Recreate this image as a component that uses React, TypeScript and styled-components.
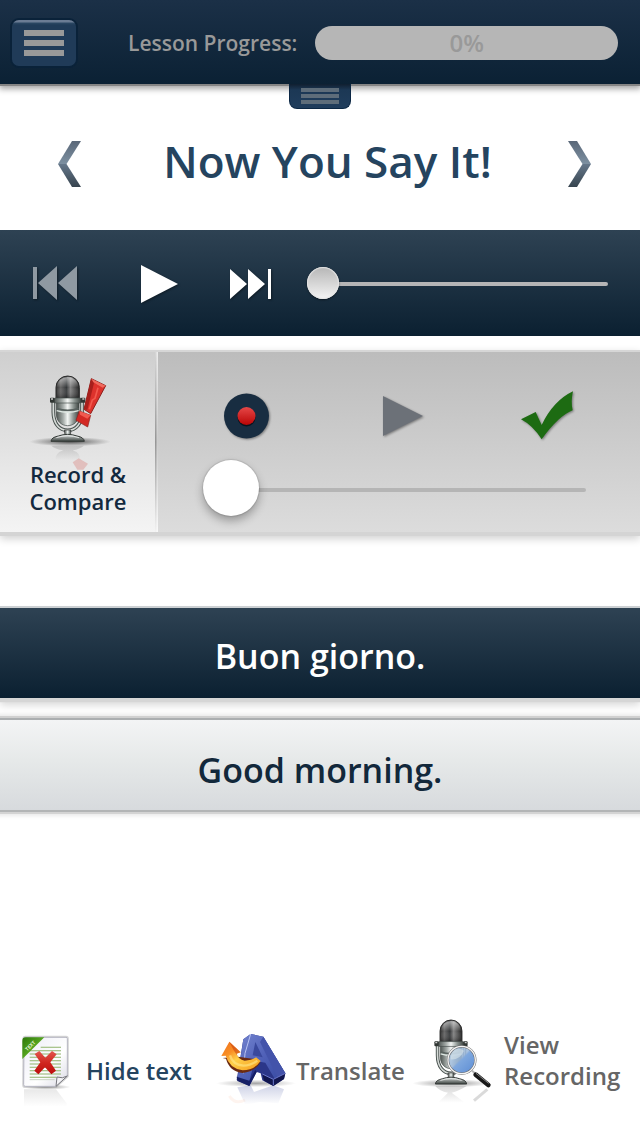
import React, { useState } from "react";
import styled, { createGlobalStyle } from "styled-components";

const GlobalStyle = createGlobalStyle`
  * { box-sizing: border-box; }
  body {
    margin: 0;
    background: #fff;
    font-family: "Open Sans", "Noto Sans", sans-serif;
    font-weight: 600;
  }
  button { font: inherit; color: inherit; border: 0; padding: 0; background: none; cursor: pointer; }
  svg { display: block; overflow: visible; }
`;

const Page = styled.div`
  min-height: 100vh;
  display: flex;
  flex-direction: column;
`;

const Header = styled.header`
  position: relative;
  display: flex;
  align-items: center;
  height: 84px;
  padding: 2px 22px 0 12px;
  background: linear-gradient(#1b3047, #0b2134);
  box-shadow: 0 2px 0 #858585, 0 4px 6px 1px rgba(0, 0, 0, 0.35);
`;

const MenuButton = styled.button`
  display: flex;
  flex-direction: column;
  align-items: center;
  justify-content: center;
  gap: 4px;
  width: 64px;
  height: 46px;
  margin-right: 52px;
  border-radius: 7px;
  background: linear-gradient(#6b7c94 0, #6b7c94 2px, #2c4864 3px, #203b58 5px, #203b58);
  box-shadow: 0 0 0 2px #0a2239;
`;

const MenuBar = styled.span`
  width: 40px;
  height: 6px;
  background: #999;
`;

const ProgressLabel = styled.span`
  margin-right: 18px;
  font-size: 21px;
  line-height: 30px;
  color: #999;
  white-space: nowrap;
`;

const ProgressBar = styled.div`
  flex: 1;
  height: 34px;
  border-radius: 17px;
  background: #b6b6b6;
  color: #999;
  font-size: 24px;
  line-height: 34px;
  text-align: center;
`;

const PullTab = styled.button`
  position: absolute;
  top: 100%;
  left: 50%;
  width: 62px;
  height: 25px;
  margin-left: -31px;
  padding-top: 4px;
  display: flex;
  flex-direction: column;
  align-items: center;
  gap: 2px;
  border: solid #0b2744;
  border-width: 0 1px 1px;
  border-radius: 0 0 8px 8px;
  background: linear-gradient(#101f30, #1c3855 6px, #203d5c);
`;

const TabBar = styled.span`
  width: 38px;
  height: 4px;
  background: #5e6d7a;
`;

const TitleRow = styled.section`
  display: flex;
  align-items: center;
  justify-content: space-between;
  height: 146px;
  padding: 13px 49px 0 58px;
`;

const Title = styled.h1`
  margin: 0;
  padding: 0 0 6px 6px;
  font-size: 44px;
  line-height: 60px;
  font-weight: 600;
  color: #25445f;
`;

const Player = styled.section`
  display: flex;
  align-items: center;
  gap: 35px;
  height: 106px;
  padding: 1px 32px 0;
  background: linear-gradient(#2e4253, #0b2031);
`;

const PlayerButtons = styled.div`
  display: flex;
  align-items: center;
  gap: 52px;
`;

const IconButton = styled.button<{ $width?: number }>`
  width: ${(p) => (p.$width ? `${p.$width}px` : "auto")};
  filter: drop-shadow(1px 1px 1px rgba(0, 0, 0, 0.4));
`;

const Slider = styled.input<{ $size: number; $shift: number; $track: string; $thumb: string; $shadow: string }>`
  appearance: none;
  flex: 1;
  width: 100%;
  min-width: 0;
  height: ${(p) => p.$size}px;
  margin: 0;
  background: none;
  &::-webkit-slider-runnable-track {
    height: 4px;
    border-radius: 2px;
    background: ${(p) => p.$track};
  }
  &::-webkit-slider-thumb {
    appearance: none;
    width: ${(p) => p.$size}px;
    height: ${(p) => p.$size}px;
    margin-top: ${(p) => p.$shift}px;
    border-radius: 50%;
    background: ${(p) => p.$thumb};
    box-shadow: ${(p) => p.$shadow};
  }
`;

const Recorder = styled.section`
  display: flex;
  margin-top: 14px;
  border-top: 2px solid #d6d6d6;
  border-bottom: 4px solid #d4d4d4;
  box-shadow: 0 3px 8px rgba(0, 0, 0, 0.18);
`;

const RecordTab = styled.button`
  position: relative;
  width: 158px;
  height: 180px;
  padding: 18px 24px 0 28px;
  display: flex;
  flex-direction: column;
  align-items: flex-start;
  background: linear-gradient(#cfcfcf, #f4f4f4);
  color: #13293e;
  font-size: 22px;
  line-height: 27px;
  &::after {
    content: "";
    position: absolute;
    top: 0;
    right: 0;
    width: 3px;
    height: 100%;
    background: linear-gradient(90deg, transparent, rgba(255, 255, 255, 0.7)), linear-gradient(#d0d0d0, #888 50%, #f0f0f0);
  }
`;

const TabCaption = styled.span`
  position: relative;
  width: 100px;
`;

const RecordPanel = styled.div`
  flex: 1;
  display: flex;
  flex-direction: column;
  padding: 38px 54px 14px 45px;
  gap: 20px;
  background: linear-gradient(#bcbcbc, #dcdcdc);
`;

const RecordButtons = styled.div`
  display: flex;
  align-items: center;
  justify-content: space-between;
  padding: 0 12px 0 20px;
`;

const Phrases = styled.section`
  margin-top: 70px;
  display: flex;
  flex-direction: column;
  gap: 20px;
`;

const Phrase = styled.p<{ $dark?: boolean }>`
  margin: 0;
  padding-top: ${(p) => (p.$dark ? 5 : 7)}px;
  height: ${(p) => (p.$dark ? 92 : 94)}px;
  border-top: 2px solid ${(p) => (p.$dark ? "#ccd0d3" : "#abaeb0")};
  border-bottom: ${(p) => (p.$dark ? "0" : "2px solid #b2b4b5")};
  font-size: 34px;
  line-height: 86px;
  text-align: center;
  color: ${(p) => (p.$dark ? "#fff" : "#12283b")};
  background: ${(p) => (p.$dark ? "linear-gradient(#2e4253, #0b2031)" : "linear-gradient(#f3f4f5, #e6e9e9 45%, #d7dadd)")};
  box-shadow: ${(p) => (p.$dark ? "0 4px 1px #d6d6d6, 0 7px 8px rgba(0,0,0,.16)" : "0 -2px 0 #d0d0d0, 0 2px 0 #d3d3d3, 0 0 4px 4px rgba(0,0,0,.09)")};
`;

const Footer = styled.footer`
  display: grid;
  grid-template-columns: 196fr 196fr 214fr;
  margin-top: auto;
  padding: 20px 14px 20px 20px;
`;

const FooterButton = styled.button<{ $color: string; $gap?: number }>`
  display: flex;
  align-items: flex-start;
  gap: ${(p) => p.$gap ?? 0}px;
  height: 100px;
  text-align: left;
  font-size: 24px;
  line-height: 31px;
  color: ${(p) => p.$color};
`;

const FooterText = styled.span<{ $top: number }>`
  padding-top: ${(p) => p.$top}px;
  white-space: nowrap;
`;

const Chevron = ({ right }: { right?: boolean }) => (
  <svg width="24" height="46" viewBox="0 0 24 46" aria-hidden="true">
    <defs>
      <linearGradient id="chevTop" x1="0" y1="0" x2="0" y2="1">
        <stop offset="0" stopColor="#5a6879" />
        <stop offset="1" stopColor="#7d90a1" />
      </linearGradient>
      <linearGradient id="chevBottom" x1="0" y1="0" x2="0" y2="1">
        <stop offset="0" stopColor="#65778a" />
        <stop offset="1" stopColor="#37444f" />
      </linearGradient>
    </defs>
    <g transform={right ? "translate(24 0) scale(-1 1)" : undefined}>
      <path d="M14 0H23L8.500 23H0Z" fill="url(#chevTop)" />
      <path d="M0 23H8.500L23 46H14Z" fill="url(#chevBottom)" />
    </g>
  </svg>
);

const MicDefs = () => (
  <defs>
    <linearGradient id="micHead">
      <stop offset="0" stopColor="#333" />
      <stop offset=".2" stopColor="#777" />
      <stop offset=".45" stopColor="#3c3f41" />
      <stop offset=".62" stopColor="#999" />
      <stop offset="1" stopColor="#262626" />
    </linearGradient>
    <linearGradient id="micBody">
      <stop offset="0" stopColor="#4e5552" />
      <stop offset=".3" stopColor="#a5aca9" />
      <stop offset=".5" stopColor="#f3f6f4" />
      <stop offset=".75" stopColor="#8d9692" />
      <stop offset="1" stopColor="#3f4643" />
    </linearGradient>
    <linearGradient id="micTop" x1="0" y1="0" x2="0" y2="1">
      <stop offset="0" stopColor="#fff" stopOpacity=".55" />
      <stop offset=".5" stopColor="#fff" stopOpacity="0" />
      <stop offset="1" stopColor="#000" stopOpacity=".3" />
    </linearGradient>
    <linearGradient id="micBase" x1="0" y1="0" x2="0" y2="1">
      <stop offset="0" stopColor="#dfe3e1" />
      <stop offset="1" stopColor="#39403d" />
    </linearGradient>
    <radialGradient id="floor">
      <stop offset="0" stopColor="#000" stopOpacity=".65" />
      <stop offset=".5" stopColor="#000" stopOpacity=".3" />
      <stop offset="1" stopColor="#000" stopOpacity="0" />
    </radialGradient>
    <linearGradient id="fade" x1="0" y1="0" x2="0" y2="1">
      <stop offset="0" stopColor="#777" stopOpacity=".3" />
      <stop offset="1" stopColor="#777" stopOpacity="0" />
    </linearGradient>
    <pattern id="mesh" width="6" height="6" patternUnits="userSpaceOnUse">
      <path d="M0 0L6 6M6 0L0 6" stroke="#111" strokeWidth="1" opacity=".5" />
    </pattern>
  </defs>
);

const Microphone = () => (
  <g>
    <path d="M-43 78V108C-43 144-24 163 0 163S43 144 43 108V78" fill="none" stroke="#47504d" strokeWidth="11" />
    <path d="M-43 78V108C-43 144-24 163 0 163S43 144 43 108V78" fill="none" stroke="#d5dad7" strokeWidth="5" />
    <path d="M-34 78H34V114C34 136 18 149 0 149S-34 136-34 114Z" fill="url(#micBody)" stroke="#3d4542" strokeWidth="2" />
    <path d="M-33 98Q0 108 33 98" fill="none" stroke="#58625f" strokeWidth="5" />
    <path d="M-33 104Q0 114 33 104" fill="none" stroke="#dfe9e4" strokeWidth="4" />
    <path d="M-35 68V34A35 34 0 0 1 35 34V68Z" fill="url(#micHead)" stroke="#2a2a2a" strokeWidth="3" />
    <path d="M-32 66V34A32 31 0 0 1 32 34V66Z" fill="url(#mesh)" />
    <path d="M-32 66V34A32 31 0 0 1 32 34V66Z" fill="url(#micTop)" />
    <rect x="-40" y="66" width="80" height="15" rx="3" fill="url(#micBody)" stroke="#444c49" strokeWidth="2" />
    <rect x="-53" y="65" width="14" height="15" rx="3" fill="#303633" />
    <rect x="39" y="65" width="14" height="15" rx="3" fill="#303633" />
    <path d="M-50 69H-44M44 69H50" stroke="#ccc" strokeWidth="4" />
    <path d="M-10 162H10L8 178H-8Z" fill="url(#micBody)" stroke="#333" strokeWidth="2" />
    <path d="M-50 196Q-49 184-28 180Q0 170 28 180Q49 184 50 196Z" fill="url(#micBase)" stroke="#343a37" strokeWidth="3" />
    <path d="M-34 185Q0 174 34 185" fill="none" stroke="#fff" strokeWidth="3" opacity=".7" />
  </g>
);

const RecordIcon = () => (
  <svg width="84" height="91" viewBox="84 75 252 273" aria-hidden="true">
    <MicDefs />
    <ellipse cx="210" cy="290" rx="122" ry="14" fill="url(#floor)" />
    <path d="M154 302H252Q240 312 218 316Q245 326 238 345H168Q162 326 190 316Q164 312 154 302Z" fill="url(#fade)" />
    <path d="M218 352L236 340L264 356L250 374H232Z" fill="#dc9f9b" opacity=".55" />
    <g transform="translate(203 93)">
      <Microphone />
    </g>
    <path d="M274 101L317 122L272 206L252 193Z" fill="#dd322c" stroke="#8c211d" strokeWidth="3" />
    <path d="M274 101L283 110L262 195L252 193Z" fill="#a81f1c" />
    <path d="M274 101L317 122L308 128L280 112Z" fill="#f06a5d" />
    <path d="M294 128L285 160L277 165L268 193" fill="none" stroke="#f2594d" strokeWidth="5" />
    <path d="M238 198L272 211L263 246L228 226Z" fill="#d32924" stroke="#8c211d" strokeWidth="2" />
    <path d="M238 198L272 211L262 221L240 209Z" fill="#f05a50" />
  </svg>
);

const ViewIcon = () => (
  <svg width="88" height="100" viewBox="6 18 264 300" aria-hidden="true">
    <defs>
      <linearGradient id="lens" x1="0" y1="0" x2="1" y2="1">
        <stop offset="0" stopColor="#b6cde0" stopOpacity=".8" />
        <stop offset=".45" stopColor="#9cb9db" stopOpacity=".88" />
        <stop offset=".5" stopColor="#7fa8de" />
        <stop offset="1" stopColor="#5a8bd4" />
      </linearGradient>
    </defs>
    <ellipse cx="125" cy="220" rx="118" ry="12" fill="url(#floor)" opacity=".7" />
    <path d="M76 228H170Q145 244 125 248L165 278H84L114 248Q88 244 76 228Z" fill="url(#fade)" />
    <path d="M192 272L232 238" stroke="#888" strokeWidth="9" opacity=".3" />
    <g transform="translate(123 30) scale(.94 .98)">
      <Microphone />
    </g>
    <path d="M186 182L235 224" stroke="#b7b7b7" strokeWidth="6" />
    <path d="M197 194L235 225" stroke="#191919" strokeWidth="14" strokeLinecap="round" />
    <path d="M198 190L236 220" stroke="#858585" strokeWidth="3" />
    <circle cx="155" cy="150" r="41" fill="url(#lens)" stroke="#6a6a6a" strokeWidth="7" />
    <circle cx="155" cy="150" r="41" fill="none" stroke="#f5f5f5" strokeWidth="4" />
    <path d="M122 148Q150 150 162 122Q140 106 124 132Z" fill="#d8e4e9" opacity=".6" />
  </svg>
);

const HideIcon = () => (
  <svg width="60" height="100" viewBox="30 18 180 300" aria-hidden="true">
    <defs>
      <linearGradient id="sheet" x1="0" y1="0" x2="1" y2="1">
        <stop offset="0" stopColor="#ececf6" />
        <stop offset=".6" stopColor="#fff" />
        <stop offset="1" stopColor="#d9d9e4" />
      </linearGradient>
      <linearGradient id="cross" x1="0" y1="0" x2="0" y2="1">
        <stop offset="0" stopColor="#e2564e" />
        <stop offset=".5" stopColor="#d02720" />
        <stop offset="1" stopColor="#bd0c0c" />
      </linearGradient>
      <linearGradient id="leaf" x1="0" y1="0" x2="1" y2="1">
        <stop offset="0" stopColor="#2c7809" />
        <stop offset=".5" stopColor="#55a51f" />
        <stop offset="1" stopColor="#276e06" />
      </linearGradient>
    </defs>
    <ellipse cx="108" cy="231" rx="74" ry="8" fill="url(#floor)" opacity=".7" />
    <path d="M42 238H138L170 280V290H42Z" fill="url(#fade)" opacity=".55" />
    <path d="M42 86Q42 82 46 82H168Q172 82 172 86V198L138 229H46Q41 229 41 224Z" fill="#888" opacity=".4" stroke="#999" strokeWidth="9" />
    <path d="M42 86Q42 82 46 82H168Q172 82 172 86V198L138 229H46Q41 229 41 224Z" fill="url(#sheet)" stroke="#b6b6c2" strokeWidth="3" />
    {[112, 122, 132, 142, 152, 162, 172, 182, 192, 202].map((y) => (
      <path key={y} d={`M${y < 122 ? 92 : 59} ${y}H${y > 198 ? 140 : 153}`} stroke="#aac58f" strokeWidth="4" />
    ))}
    <path d="M59 209H134" stroke="#cbd5c5" strokeWidth="3" />
    <path d="M138 229L141 201Q158 207 172 198Z" fill="#f3f3f6" stroke="#77777d" strokeWidth="3" />
    <path d="M37 147V92Q37 82 47 82H103Z" fill="url(#leaf)" />
    <text x="0" y="0" transform="translate(52 124) rotate(-45)" fontSize="15" fontWeight="700" fill="#e5f3d8">TEXT</text>
    <path d="M74 132L88 123L106 143L126 123L140 133L121 157L138 182L124 193L105 172L85 193L73 182L91 157Z" fill="url(#cross)" />
  </svg>
);

const TranslateIcon = () => (
  <svg width="80" height="100" viewBox="18 18 240 300" aria-hidden="true">
    <defs>
      <linearGradient id="blue" x1="0" y1="0" x2="1" y2="1">
        <stop offset="0" stopColor="#7485d0" />
        <stop offset=".5" stopColor="#5061b8" />
        <stop offset="1" stopColor="#3548a0" />
      </linearGradient>
      <linearGradient id="gold" x1="0" y1="0" x2="1" y2="1">
        <stop offset="0" stopColor="#ee6f1c" />
        <stop offset=".3" stopColor="#f98f25" />
        <stop offset=".5" stopColor="#ffd04a" />
        <stop offset="1" stopColor="#f59a1b" />
      </linearGradient>
      <linearGradient id="blueFade" x1="0" y1="0" x2="0" y2="1">
        <stop offset="0" stopColor="#5260a8" stopOpacity=".28" />
        <stop offset="1" stopColor="#5260a8" stopOpacity="0" />
      </linearGradient>
    </defs>
    <ellipse cx="138" cy="220" rx="120" ry="11" fill="url(#floor)" opacity=".55" />
    <path d="M82 232L122 226L132 246L190 226L222 238L205 280L150 276L106 284Z" fill="url(#blueFade)" />
    <path d="M58 258Q75 285 105 270" stroke="#f4a77e" strokeWidth="9" fill="none" opacity=".12" />
    <path d="M100 88L122 72L160 80L226 190L222 207L190 228L157 211L152 190L140 186L118 228L80 210Z" fill="#2b3689" />
    <path d="M122 72L160 80L226 190L194 206L166 158L134 152L118 214L82 206L100 88Z" fill="url(#blue)" />
    <path d="M136 96L158 142L128 136Z" fill="#39489c" />
    <path d="M160 80L226 190L202 202L150 96Z" fill="#4353aa" />
    <path d="M122 72L105 130L100 190" fill="none" stroke="#b9c4f2" strokeWidth="3" />
    <path d="M80 200L118 212L136 180L140 186L118 228L82 213Z" fill="#161f66" />
    <path d="M157 192L190 208L226 190L222 207L190 228L162 212Z" fill="#11164e" />
    <path d="M157 192L190 208L226 190M190 208V226" stroke="#6c79cc" strokeWidth="3" fill="none" />
    <path d="M38 144L48 146Q58 184 98 189Q132 186 151 158L140 148L84 140Z" fill="#6b2a12" />
    <path d="M34 138L58 95L92 127L80 131Q84 148 104 152Q124 152 138 142L152 153Q132 181 98 181Q58 175 47 137Z" fill="url(#gold)" />
    <path d="M60 136Q68 164 100 167Q124 166 142 152" fill="none" stroke="#ffe98a" strokeWidth="7" opacity=".6" />
    <path d="M58 95L92 127L80 131L84 140Q70 122 60 100Z" fill="#c9420f" opacity=".6" />
  </svg>
);

export default function App() {
  const [position, setPosition] = useState(0);
  const [recording, setRecording] = useState(0);

  return (
    <>
      <GlobalStyle />
      <Page>
        <Header>
          <MenuButton aria-label="Menu">
            <MenuBar />
            <MenuBar />
            <MenuBar />
          </MenuButton>
          <ProgressLabel id="progress-label">Lesson Progress:</ProgressLabel>
          <ProgressBar role="progressbar" aria-labelledby="progress-label" aria-valuenow={0} aria-valuemin={0} aria-valuemax={100}>
            0%
          </ProgressBar>
          <PullTab aria-label="Show lesson list">
            <TabBar />
            <TabBar />
            <TabBar />
          </PullTab>
        </Header>

        <TitleRow>
          <button aria-label="Previous page"><Chevron /></button>
          <Title>Now You Say It!</Title>
          <button aria-label="Next page"><Chevron right /></button>
        </TitleRow>

        <Player>
          <PlayerButtons>
            <IconButton $width={56} aria-label="Previous phrase">
              <svg width="46" height="38" viewBox="0 0 46 38" fill="#8f99a2">
                <path d="M1 2H5V34H1ZM25 1V35L6 18ZM45 1V35L26 18Z" />
              </svg>
            </IconButton>
            <IconButton aria-label="Play">
              <svg width="38" height="38" viewBox="0 0 38 38" fill="#fff">
                <path d="M1 0L38 19L1 38Z" />
              </svg>
            </IconButton>
            <IconButton aria-label="Next phrase">
              <svg width="42" height="32" viewBox="0 0 42 32" fill="#fff">
                <path d="M0 1L17 16L0 31ZM18 1L35 16L18 31ZM38 1H41V31H38Z" />
              </svg>
            </IconButton>
          </PlayerButtons>
          <Slider
            type="range"
            aria-label="Playback position"
            value={position}
            onChange={(e) => setPosition(Number(e.target.value))}
            $size={32}
            $shift={-15}
            $track="#b5b5b6"
            $thumb="linear-gradient(#b6b6b6, #f4f4f4)"
            $shadow="inset 0 0 1px 1px #e4e4e4, 0 1px 2px rgba(0,0,0,.5)"
          />
        </Player>

        <Recorder>
          <RecordTab>
            <RecordIcon />
            <TabCaption>Record &amp; Compare</TabCaption>
          </RecordTab>
          <RecordPanel>
            <RecordButtons>
              <IconButton aria-label="Record">
                <svg width="48" height="52" viewBox="0 0 48 52">
                  <defs>
                    <linearGradient id="redDot" x1="0" y1="0" x2="0" y2="1">
                      <stop offset="0" stopColor="#e64848" />
                      <stop offset="1" stopColor="#b90505" />
                    </linearGradient>
                  </defs>
                  <circle cx="23.500" cy="26" r="22.500" fill="#182d41" />
                  <circle cx="23.500" cy="27.500" r="9" fill="#08131e" />
                  <circle cx="23.500" cy="26" r="9" fill="url(#redDot)" />
                </svg>
              </IconButton>
              <IconButton aria-label="Play recording">
                <svg width="56" height="42" viewBox="0 0 56 42" fill="#6c7178">
                  <path d="M16 1L56 21L16 41Z" />
                </svg>
              </IconButton>
              <IconButton aria-label="Accept recording">
                <svg width="56" height="52" viewBox="984 60 168 156" fill="#1d6b12">
                  <path d="M993 148L1037 126L1055 165Q1090 92 1149 64Q1142 94 1148 121Q1105 138 1055 208Q1028 166 993 148Z" />
                </svg>
              </IconButton>
            </RecordButtons>
            <Slider
              type="range"
              aria-label="Recording position"
              value={recording}
              onChange={(e) => setRecording(Number(e.target.value))}
              $size={56}
              $shift={-28}
              $track="#b5b5b5"
              $thumb="#fff"
              $shadow="0 0 1px 1px rgba(0,0,0,.1), 0 5px 10px rgba(0,0,0,.3)"
            />
          </RecordPanel>
        </Recorder>

        <Phrases>
          <Phrase $dark lang="it">Buon giorno.</Phrase>
          <Phrase>Good morning.</Phrase>
        </Phrases>

        <Footer>
          <FooterButton $color="#25445f" $gap={6}>
            <HideIcon />
            <FooterText $top={39}>Hide text</FooterText>
          </FooterButton>
          <FooterButton $color="#666">
            <TranslateIcon />
            <FooterText $top={39}>Translate</FooterText>
          </FooterButton>
          <FooterButton $color="#666" $gap={4}>
            <ViewIcon />
            <FooterText $top={13}>View<br />Recording</FooterText>
          </FooterButton>
        </Footer>
      </Page>
    </>
  );
}
